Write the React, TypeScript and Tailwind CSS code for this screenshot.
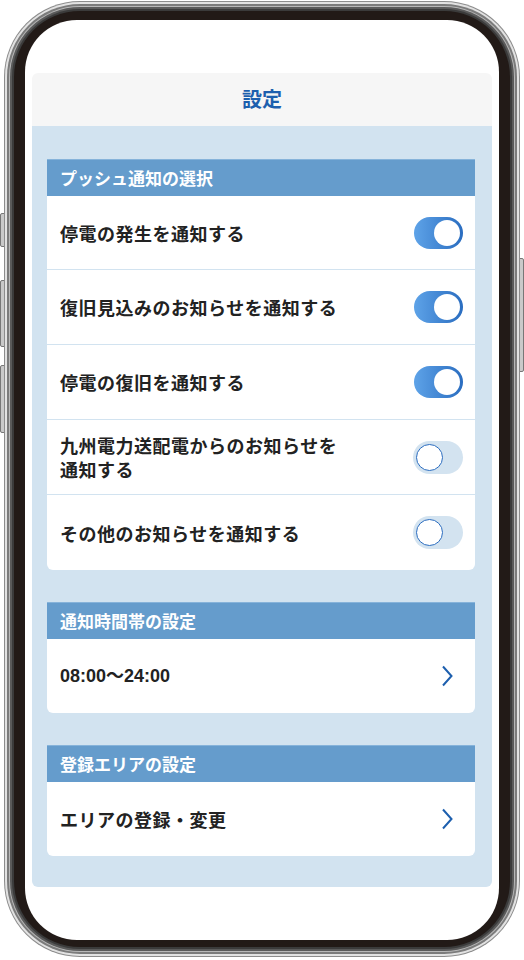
import { type FC } from 'react'

const PUSH_ITEMS: Array<{ label: string[]; on: boolean }> = [
  { label: ['停電の発生を通知する'], on: true },
  { label: ['復旧見込みのお知らせを通知する'], on: true },
  { label: ['停電の復旧を通知する'], on: true },
  { label: ['九州電力送配電からのお知らせを', '通知する'], on: false },
  { label: ['その他のお知らせを通知する'], on: false },
]

const Toggle: FC<{ on: boolean }> = ({ on }) => {
  if (on) {
    return (
      <div className="flex h-[32px] w-[49px] shrink-0 items-center justify-end rounded-full bg-linear-to-r from-[#5ea3e8] to-[#2a6dc0] p-[3px]">
        <div className="h-[26px] w-[26px] rounded-full bg-white" />
      </div>
    )
  }
  return (
    <div className="flex h-[33px] w-[50px] shrink-0 items-center justify-start rounded-full bg-[#d3e3f0] p-[3px]">
      <div className="h-[27px] w-[27px] rounded-full border-[1.5px] border-[#2a6cbf] bg-white" />
    </div>
  )
}

const Chevron: FC = () => (
  <svg width="12" height="22" viewBox="0 0 12 22" fill="none">
    <path d="M2 1.5 L10.5 11 L2 20.5" stroke="#1d5fae" strokeWidth="2" />
  </svg>
)

const SectionCard: FC<{ title: string; children: React.ReactNode }> = ({ title, children }) => (
  <div className="overflow-hidden rounded-b-[6px] bg-white">
    <div className="flex h-[37px] items-center border-t border-[#86b3da] bg-[#659ccc] px-[13px] text-[17px] font-bold text-white">
      {title}
    </div>
    <div className="flex flex-col divide-y divide-[#d2e3f0]">{children}</div>
  </div>
)

const LinkRow: FC<{ label: string; latin?: boolean }> = ({ label, latin }) => (
  <div className="flex h-[74px] items-center justify-between pl-[13px] pr-[22px]">
    <span
      className={
        latin
          ? "font-['Liberation_Sans','Noto_Sans_CJK_JP',sans-serif] text-[18px] font-bold text-[#222]"
          : 'text-[18px] font-bold tracking-[0.5px] text-[#222]'
      }
    >
      {label}
    </span>
    <Chevron />
  </div>
)

export default function App() {
  return (
    <div className="relative h-[960px] w-[524px] overflow-hidden bg-white font-['Noto_Sans_CJK_JP',sans-serif]">
      {/* side buttons */}
      <div className="absolute left-0 top-[213px] h-[34px] w-[6px] rounded-l-[2px] border border-[#777] bg-[#c9c9c9]" />
      <div className="absolute left-0 top-[280px] h-[67px] w-[6px] rounded-l-[2px] border border-[#777] bg-[#c9c9c9]" />
      <div className="absolute left-0 top-[365px] h-[68px] w-[6px] rounded-l-[2px] border border-[#777] bg-[#c9c9c9]" />
      <div className="absolute right-0 top-[258px] h-[114px] w-[6px] rounded-r-[2px] border border-[#777] bg-[#c9c9c9]" />

      <div className="relative ml-[4px] mt-[1px] h-[956px] w-[516px] rounded-[76px] bg-[#8c8c8c] p-[1px]">
        <div className="h-full rounded-[75px] bg-[#e2e2e2] p-[2px]">
          <div className="h-full rounded-[73px] bg-[#7b7b7b] p-[2px]">
            <div className="h-full rounded-[71px] bg-[#b8b8b8] p-[1px]">
              <div className="h-full rounded-[70px] bg-[#5a5a5a] p-[2px]">
                <div className="h-full rounded-[68px] bg-[#3b3b3b] p-[2px]">
                  <div className="h-full rounded-[66px] bg-[#221a17] px-[11px] pb-[7px] pt-[9px]">
                    {/* screen */}
                    <div className="h-full rounded-[52px] bg-white px-[7px] pt-[53px]">
                      <div className="flex h-[53px] items-center justify-center rounded-t-[6px] bg-[#f6f6f6] pb-[2px] text-[20px] font-bold text-[#1d5fae]">
                        設定
                      </div>
                      <div className="flex flex-col gap-[32px] rounded-b-[6px] bg-[#d2e3f0] pb-[31px] pl-[15px] pr-[17px] pt-[33px]">
                        <SectionCard title="プッシュ通知の選択">
                          {PUSH_ITEMS.map((item, index) => (
                            <div
                              key={index}
                              className="flex h-[75px] items-center justify-between pl-[13px] pr-[12px] first:h-[74px]"
                            >
                              <span className="text-[18px] font-bold leading-[24px] tracking-[0.5px] text-[#222]">
                                {item.label.map((line, i) => (
                                  <span key={i} className="block">
                                    {line}
                                  </span>
                                ))}
                              </span>
                              <Toggle on={item.on} />
                            </div>
                          ))}
                        </SectionCard>
                        <SectionCard title="通知時間帯の設定">
                          <LinkRow label="08:00〜24:00" latin />
                        </SectionCard>
                        <SectionCard title="登録エリアの設定">
                          <LinkRow label="エリアの登録・変更" />
                        </SectionCard>
                      </div>
                    </div>
                  </div>
                </div>
              </div>
            </div>
          </div>
        </div>
      </div>
    </div>
  )
}
